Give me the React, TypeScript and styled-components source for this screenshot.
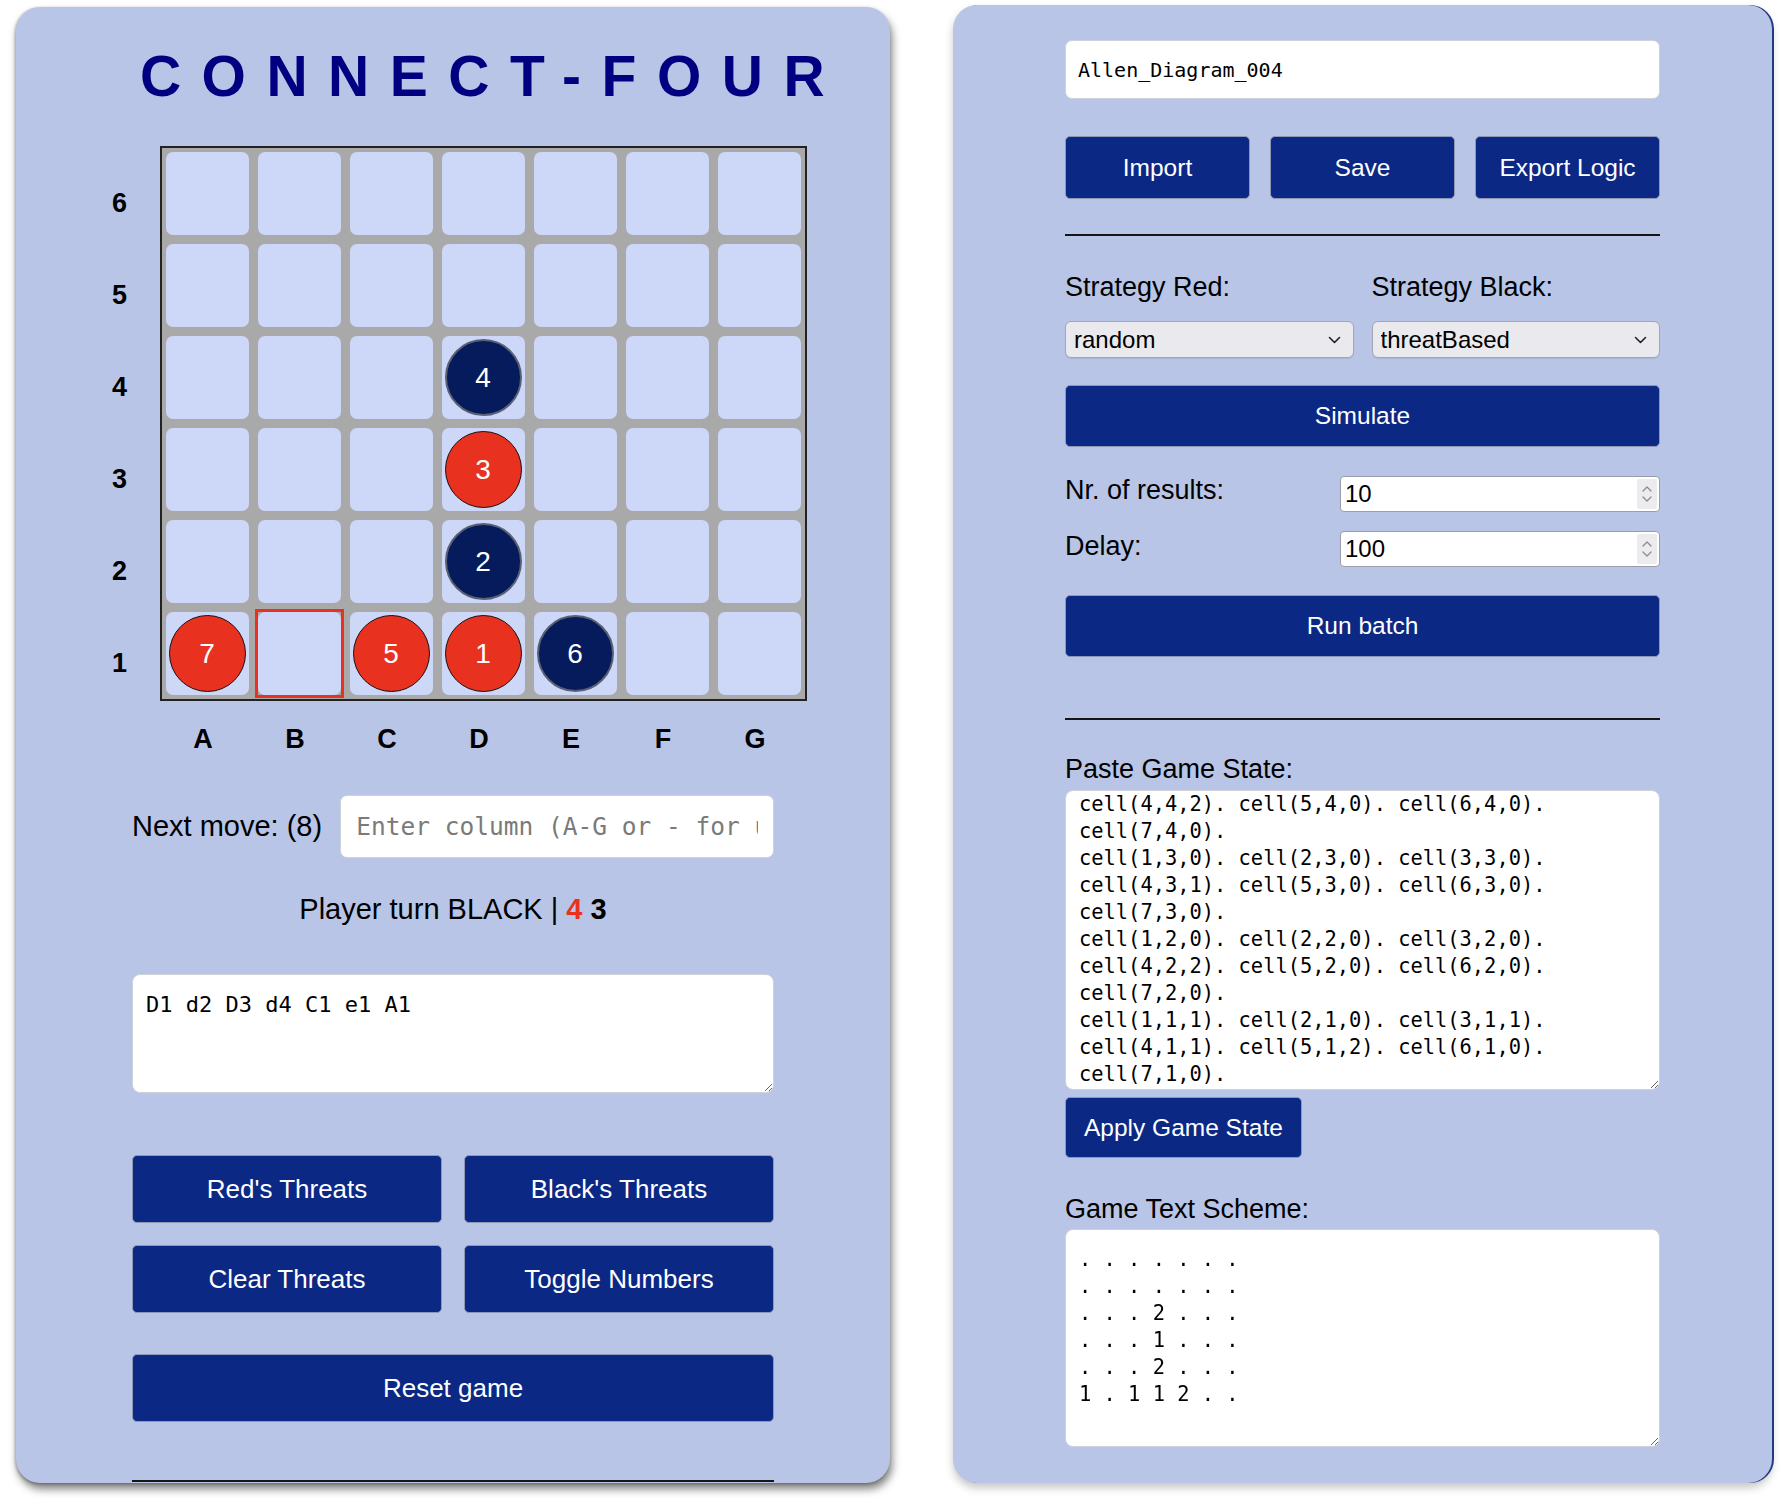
import React, { useLayoutEffect, useRef } from "react";
import styled, { createGlobalStyle } from "styled-components";

const GlobalStyle = createGlobalStyle`
  html, body { margin: 0; padding: 0; background: #ffffff; }
  body { font-family: "Liberation Sans", Arial, sans-serif; }
  * { box-sizing: border-box; }
`;

const SANS = `"Liberation Sans", Arial, sans-serif`;
const MONO = `"DejaVu Sans Mono", "Liberation Mono", monospace`;
const NAVY_BTN = "#0b2885";
const RED = "#e8321f";

const Page = styled.div`
  display: flex;
  align-items: flex-start;
  gap: 63px;
  padding: 5px 0 0 16px;
  width: 1780px;
  height: 1498px;
  overflow: hidden;
`;

const Panel = styled.div`
  background: #b8c5e6;
  border-radius: 24px;
  display: flex;
  flex-direction: column;
  flex-shrink: 0;
`;

const LeftPanel = styled(Panel)`
  width: 874px;
  height: 1476px;
  margin-top: 2px;
  padding: 40px 116px 0;
  overflow: hidden;
  box-shadow: 2px 6px 9px rgba(0, 0, 0, 0.5), -1px 1px 3px rgba(0, 0, 0, 0.25);
`;

const RightPanel = styled(Panel)`
  width: 819px;
  height: 1478px;
  padding: 35px 112px 0;
  box-shadow: 2px 0 0 #233a86, 0 5px 9px rgba(0, 0, 0, 0.22);
`;

const Title = styled.h1`
  margin: 0 0 0 79px;
  align-self: center;
  width: max-content;
  white-space: nowrap;
  font: bold 57px/58px ${SANS};
  letter-spacing: 20.5px;
  color: #000080;
`;

const BoardArea = styled.div`
  align-self: center;
  display: flex;
  gap: 20px;
  margin-top: 41px;
`;

const RowLabels = styled.div`
  display: grid;
  grid-template-rows: repeat(6, 83px);
  row-gap: 9px;
  padding-top: 16px;
  width: 40px;
`;

const AxisLabel = styled.div`
  display: flex;
  align-items: center;
  justify-content: center;
  font: bold 27px/31px ${SANS};
  color: #000;
`;

const BoardColumn = styled.div`
  display: flex;
  flex-direction: column;
`;

const Board = styled.div`
  display: grid;
  grid-template-columns: repeat(7, 83px);
  grid-template-rows: repeat(6, 83px);
  gap: 9px;
  padding: 4px;
  background: #a9a9a9;
  border: 2px solid #222;
`;

const Slot = styled.div<{ $selected?: boolean }>`
  outline: ${(p) => (p.$selected ? `3px solid ${RED}` : "none")};
`;

const Cell = styled.div`
  width: 100%;
  height: 100%;
  background: #cdd7f7;
  border-radius: 7px;
  display: flex;
  align-items: center;
  justify-content: center;
`;

const Disc = styled.div<{ $color: "red" | "black" }>`
  width: 77px;
  height: 77px;
  border-radius: 50%;
  background: ${(p) => (p.$color === "red" ? RED : "#061b5c")};
  border: ${(p) => (p.$color === "red" ? "1.5px solid #111" : "2px solid #5a6074")};
  color: #fff;
  font: 28px ${SANS};
  display: flex;
  align-items: center;
  justify-content: center;
`;

const ColLabels = styled.div`
  display: grid;
  grid-template-columns: repeat(7, 83px);
  column-gap: 9px;
  padding-left: 2px;
  margin-top: 23px;
`;

const MoveRow = styled.div`
  display: flex;
  align-items: center;
  gap: 18px;
  margin-top: 40px;
`;

const MoveLabel = styled.label`
  font: 29px/33px ${SANS};
  color: #000;
  white-space: nowrap;
`;

const TextInput = styled.input`
  display: block;
  background: #fff;
  border: 1px solid #cfd2da;
  border-radius: 7px;
  outline: none;
  color: #000;
  &::placeholder {
    color: #7a7a7a;
  }
`;

const MoveInput = styled(TextInput)`
  flex: 1;
  min-width: 0;
  height: 63px;
  padding: 0 15px;
  font: 24.5px ${MONO};
`;

const PlayerTurn = styled.div`
  margin-top: 35px;
  text-align: center;
  font: 29px/33px ${SANS};
  color: #000;
`;

const TurnRed = styled.b`
  color: ${RED};
`;

const TurnBlack = styled.b`
  color: #000;
`;

const TextArea = styled.textarea<{ $h: number; $size: number }>`
  display: block;
  width: 100%;
  height: ${(p) => p.$h}px;
  padding: 16px 13px;
  background: #fff;
  border: 1px solid #cfd2da;
  border-radius: 8px;
  font: ${(p) => p.$size}px/27px ${MONO};
  color: #000;
  outline: none;
  resize: both;
`;

const ButtonGrid = styled.div<{ $cols: number; $gap: number }>`
  display: grid;
  grid-template-columns: repeat(${(p) => p.$cols}, 1fr);
  gap: ${(p) => p.$gap}px;
`;

const Button = styled.button<{ $h: number; $size: number }>`
  display: block;
  height: ${(p) => p.$h}px;
  background: ${NAVY_BTN};
  color: #fff;
  border: 1px solid #8e98b6;
  border-radius: 5px;
  font: ${(p) => p.$size}px ${SANS};
  padding: 0 18px;
  cursor: pointer;
`;

const Spaced = styled.div<{ $mt: number }>`
  margin-top: ${(p) => p.$mt}px;
`;

const Divider = styled.hr<{ $mt: number }>`
  flex-shrink: 0;
  margin: ${(p) => p.$mt}px 0 0;
  height: 2px;
  border: none;
  background: #151515;
`;

const NameInput = styled(TextInput)`
  width: 100%;
  height: 59px;
  padding: 0 12px;
  font: 20px ${MONO};
  flex-shrink: 0;
`;

const StrategyGrid = styled.div`
  display: grid;
  grid-template-columns: 1fr 1fr;
  column-gap: 18px;
  row-gap: 18px;
  margin-top: 36px;
`;

const FieldLabel = styled.div<{ $shift?: number }>`
  font: 27px/31px ${SANS};
  color: #000;
  margin-top: ${(p) => p.$shift ?? 0}px;
`;

const SelectBox = styled.div`
  display: flex;
  align-items: center;
  height: 37px;
  border: 1px solid #a3a7b4;
  border-radius: 6px;
  background: #e9e9ee;
  padding: 0 12px 0 8px;
  box-shadow: 0 1px 1px rgba(0, 0, 0, 0.08);
`;

const NativeSelect = styled.select`
  flex: 1;
  min-width: 0;
  appearance: none;
  -webkit-appearance: none;
  border: none;
  background: transparent;
  font: 24px ${SANS};
  color: #000;
  padding: 0;
  outline: none;
`;

const FieldRow = styled.div<{ $mt: number }>`
  display: grid;
  grid-template-columns: 275px minmax(0, 1fr);
  align-items: start;
  margin-top: ${(p) => p.$mt}px;
`;

const NumberBox = styled.div`
  display: flex;
  align-items: stretch;
  height: 36px;
  border: 1px solid #9a9eab;
  border-radius: 4px;
  background: #fff;
  padding: 2px;
`;

const NumberInput = styled.input`
  flex: 1;
  min-width: 0;
  width: 0;
  border: none;
  outline: none;
  background: transparent;
  font: 24px ${SANS};
  color: #000;
  padding: 0 2px;
`;

const Spinner = styled.div`
  width: 20px;
  background: #ececef;
  border-radius: 2px;
  display: flex;
  flex-direction: column;
  align-items: center;
  justify-content: center;
  gap: 4px;
`;

const ApplyButton = styled(Button)`
  align-self: flex-start;
`;

const Chevron = () => (
  <svg width="13" height="8" viewBox="0 0 13 8" fill="none">
    <path d="M1.5 1.5 L6.5 6.5 L11.5 1.5" stroke="#222" strokeWidth="1.6" strokeLinecap="round" strokeLinejoin="round" />
  </svg>
);

const SpinArrow = ({ up }: { up?: boolean }) => (
  <svg width="10" height="6" viewBox="0 0 10 6" fill="none">
    <path
      d={up ? "M1 5 L5 1 L9 5" : "M1 1 L5 5 L9 1"}
      stroke="#8a8a8f"
      strokeWidth="1.2"
      strokeLinecap="round"
      strokeLinejoin="round"
    />
  </svg>
);

type Piece = { color: "red" | "black"; n: number };
const COLS = ["A", "B", "C", "D", "E", "F", "G"];
const pieces: Record<string, Piece> = {
  A1: { color: "red", n: 7 },
  C1: { color: "red", n: 5 },
  D1: { color: "red", n: 1 },
  E1: { color: "black", n: 6 },
  D2: { color: "black", n: 2 },
  D3: { color: "red", n: 3 },
  D4: { color: "black", n: 4 },
};

const cellValue = (c: number, r: number): number => {
  const p = pieces[`${COLS[c - 1]}${r}`];
  if (!p) return 0;
  return p.color === "red" ? 1 : 2;
};

const stateText = [6, 5, 4, 3, 2, 1]
  .map((r) =>
    [1, 2, 3, 4, 5, 6, 7].map((c) => `cell(${c},${r},${cellValue(c, r)}).`).join(" ")
  )
  .join("\n");

const schemeText = [6, 5, 4, 3, 2, 1]
  .map((r) =>
    [1, 2, 3, 4, 5, 6, 7]
      .map((c) => {
        const v = cellValue(c, r);
        return v === 0 ? "." : String(v);
      })
      .join(" ")
  )
  .join("\n");

export default function App() {
  const pasteRef = useRef<HTMLTextAreaElement>(null);

  useLayoutEffect(() => {
    if (pasteRef.current) pasteRef.current.scrollTop = 205;
  }, []);

  return (
    <>
      <GlobalStyle />
      <Page>
        <LeftPanel>
          <Title>CONNECT-FOUR</Title>
          <BoardArea>
            <RowLabels>
              {[6, 5, 4, 3, 2, 1].map((r) => (
                <AxisLabel key={r}>{r}</AxisLabel>
              ))}
            </RowLabels>
            <BoardColumn>
              <Board>
                {[6, 5, 4, 3, 2, 1].map((r) =>
                  COLS.map((c) => {
                    const key = `${c}${r}`;
                    const p = pieces[key];
                    return (
                      <Slot key={key} $selected={key === "B1"}>
                        <Cell>{p && <Disc $color={p.color}>{p.n}</Disc>}</Cell>
                      </Slot>
                    );
                  })
                )}
              </Board>
              <ColLabels>
                {COLS.map((c) => (
                  <AxisLabel key={c}>{c}</AxisLabel>
                ))}
              </ColLabels>
            </BoardColumn>
          </BoardArea>

          <MoveRow>
            <MoveLabel>Next move: (8)</MoveLabel>
            <MoveInput placeholder="Enter column (A-G or - for undo)" />
          </MoveRow>

          <PlayerTurn>
            Player turn BLACK | <TurnRed>4</TurnRed> <TurnBlack>3</TurnBlack>
          </PlayerTurn>

          <Spaced $mt={48}>
            <TextArea $h={119} $size={22} defaultValue="D1 d2 D3 d4 C1 e1 A1" />
          </Spaced>

          <Spaced $mt={62}>
            <ButtonGrid $cols={2} $gap={22}>
              <Button $h={68} $size={26}>Red's Threats</Button>
              <Button $h={68} $size={26}>Black's Threats</Button>
              <Button $h={68} $size={26}>Clear Threats</Button>
              <Button $h={68} $size={26}>Toggle Numbers</Button>
            </ButtonGrid>
          </Spaced>

          <Spaced $mt={41}>
            <ButtonGrid $cols={1} $gap={0}>
              <Button $h={68} $size={26}>Reset game</Button>
            </ButtonGrid>
          </Spaced>

          <Divider $mt={58} />
        </LeftPanel>

        <RightPanel>
          <NameInput defaultValue="Allen_Diagram_004" />

          <Spaced $mt={37}>
            <ButtonGrid $cols={3} $gap={20}>
              <Button $h={63} $size={24.5}>Import</Button>
              <Button $h={63} $size={24.5}>Save</Button>
              <Button $h={63} $size={24.5}>Export Logic</Button>
            </ButtonGrid>
          </Spaced>

          <Divider $mt={35} />

          <StrategyGrid>
            <FieldLabel>Strategy Red:</FieldLabel>
            <FieldLabel>Strategy Black:</FieldLabel>
            <SelectBox>
              <NativeSelect defaultValue="random">
                <option value="random">random</option>
                <option value="threatBased">threatBased</option>
              </NativeSelect>
              <Chevron />
            </SelectBox>
            <SelectBox>
              <NativeSelect defaultValue="threatBased">
                <option value="random">random</option>
                <option value="threatBased">threatBased</option>
              </NativeSelect>
              <Chevron />
            </SelectBox>
          </StrategyGrid>

          <Spaced $mt={27}>
            <ButtonGrid $cols={1} $gap={0}>
              <Button $h={62} $size={24.5}>Simulate</Button>
            </ButtonGrid>
          </Spaced>

          <FieldRow $mt={29}>
            <FieldLabel $shift={-1.5}>Nr. of results:</FieldLabel>
            <NumberBox>
              <NumberInput defaultValue="10" />
              <Spinner>
                <SpinArrow up />
                <SpinArrow />
              </Spinner>
            </NumberBox>
          </FieldRow>

          <FieldRow $mt={19}>
            <FieldLabel $shift={-0.5}>Delay:</FieldLabel>
            <NumberBox>
              <NumberInput defaultValue="100" />
              <Spinner>
                <SpinArrow up />
                <SpinArrow />
              </Spinner>
            </NumberBox>
          </FieldRow>

          <Spaced $mt={28}>
            <ButtonGrid $cols={1} $gap={0}>
              <Button $h={62} $size={24.5}>Run batch</Button>
            </ButtonGrid>
          </Spaced>

          <Divider $mt={61} />

          <Spaced $mt={34}>
            <FieldLabel>Paste Game State:</FieldLabel>
          </Spaced>
          <Spaced $mt={5}>
            <TextArea ref={pasteRef} $h={300} $size={20.4} defaultValue={stateText} />
          </Spaced>
          <Spaced $mt={7}>
            <ApplyButton $h={61} $size={24.5}>Apply Game State</ApplyButton>
          </Spaced>

          <Spaced $mt={36}>
            <FieldLabel>Game Text Scheme:</FieldLabel>
          </Spaced>
          <Spaced $mt={4}>
            <TextArea $h={218} $size={20.4} defaultValue={schemeText} />
          </Spaced>
        </RightPanel>
      </Page>
    </>
  );
}
